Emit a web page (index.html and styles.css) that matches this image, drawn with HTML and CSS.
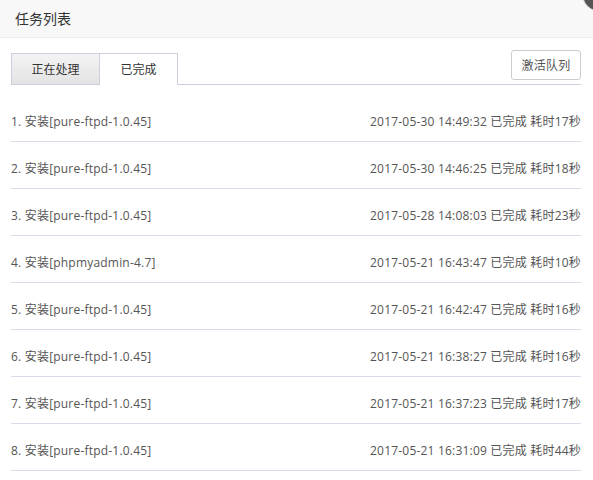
FILE: index.html
```html
<!DOCTYPE html>
<html>
<head>
<meta charset="utf-8">
<link rel="stylesheet" href="styles.css">
</head>
<body>
<div class="layer">
  <div class="title">任务列表</div>
  <span class="close"></span>
  <div class="content">
    <div class="tabbar">
      <div class="tabs">
        <div class="tab">正在处理</div>
        <div class="tab active">已完成</div>
      </div>
      <button class="btn">激活队列</button>
    </div>
    <ul class="list">
      <li><span>1. 安装[pure-ftpd-1.0.45]</span><span>2017-05-30 14:49:32 已完成 耗时17秒</span></li>
      <li><span>2. 安装[pure-ftpd-1.0.45]</span><span>2017-05-30 14:46:25 已完成 耗时18秒</span></li>
      <li><span>3. 安装[pure-ftpd-1.0.45]</span><span>2017-05-28 14:08:03 已完成 耗时23秒</span></li>
      <li><span>4. 安装[phpmyadmin-4.7]</span><span>2017-05-21 16:43:47 已完成 耗时10秒</span></li>
      <li><span>5. 安装[pure-ftpd-1.0.45]</span><span>2017-05-21 16:42:47 已完成 耗时16秒</span></li>
      <li><span>6. 安装[pure-ftpd-1.0.45]</span><span>2017-05-21 16:38:27 已完成 耗时16秒</span></li>
      <li><span>7. 安装[pure-ftpd-1.0.45]</span><span>2017-05-21 16:37:23 已完成 耗时17秒</span></li>
      <li><span>8. 安装[pure-ftpd-1.0.45]</span><span>2017-05-21 16:31:09 已完成 耗时44秒</span></li>
    </ul>
  </div>
</div>
</body>
</html>
```
FILE: styles.css
```css
* { box-sizing: border-box; }
html, body { margin: 0; padding: 0; background: #fff; }
body {
  font-family: "Open Sans", "Noto Sans CJK SC", sans-serif;
  color: #555;
  font-size: 12px;
  overflow: hidden;
  width: 593px;
  height: 480px;
}
.layer { position: relative; width: 593px; height: 480px; }
.title {
  height: 38px;
  line-height: 37px;
  padding-left: 15px;
  font-size: 14px;
  color: #333;
  background: #f8f8f8;
  border-bottom: 1px solid #eee;
}
.close {
  position: absolute;
  left: 582px;
  top: -24px;
  width: 36px;
  height: 36px;
  border-radius: 50%;
  background: #555;
  border: 1px solid #ddd;
}
.content { padding: 0 12px 0 11px; }
.tabbar {
  display: flex;
  justify-content: space-between;
  align-items: flex-end;
  border-bottom: 1px solid #cfccde;
  height: 47px;
}
.tabs { display: flex; }
.tab {
  height: 32px;
  line-height: 31px;
  text-align: center;
  color: #333;
  font-size: 12px;
  margin-bottom: -1px;
}
.tab:first-child {
  width: 89px;
  background: linear-gradient(#f4f4f4, #e3e3e3);
  border: 1px solid #cfccde;
}
.tab.active {
  width: 78px;
  background: #fff;
  border: 1px solid #cfccde;
  border-left: none;
  border-bottom-color: #fff;
}
.btn {
  font-family: inherit;
  font-size: 12px;
  letter-spacing: 0.3px;
  color: #555;
  background: #fff;
  border: 1px solid #ccc;
  border-radius: 3px;
  width: 70px;
  height: 30px;
  margin-bottom: 4px;
  padding: 0;
}
.list { list-style: none; margin: 10px 0 0; padding: 0; }
.list li {
  display: flex;
  justify-content: space-between;
  height: 47px;
  padding-top: 17px;
  line-height: 20px;
  letter-spacing: 0.2px;
  border-bottom: 1px solid #dcd9e8;
  color: #555;
}
```
